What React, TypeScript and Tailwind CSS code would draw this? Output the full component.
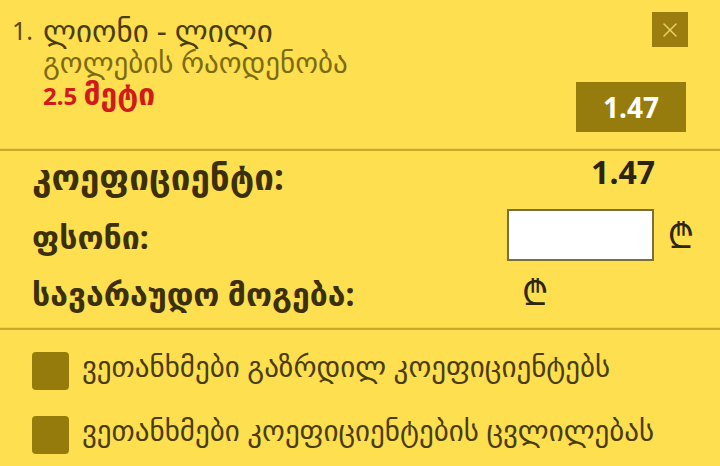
import { X } from 'lucide-react';

const FONT = { fontFamily: '"Noto Sans", "DejaVu Sans", sans-serif' };

function Divider() {
  return (
    <div className="border-t border-[#f0d247]">
      <div className="h-[2px] bg-[#c9a82c]" />
    </div>
  );
}

function Lari({ className = '' }: { className?: string }) {
  return <span className={`text-[34px] leading-none text-[#2d2610] ${className}`}>₾</span>;
}

function Agreement({ label }: { label: string }) {
  return (
    <label className="flex h-[38px] items-center gap-[13px]">
      <span className="h-[38px] w-[37px] shrink-0 rounded-[4px] bg-[#957a0c]" />
      <span className="-mt-[10px] text-[29px] leading-[38px] text-[#4a3c0a]">{label}</span>
    </label>
  );
}

export default function App() {
  return (
    <div className="h-[466px] w-[720px] overflow-hidden bg-[#fddf4f]" style={FONT}>
      {/* selected bet */}
      <div className="flex h-[148px] justify-between pl-[12px] pr-[34px] pt-[12px]">
        <div className="flex items-start gap-[10px]">
          <span className="mt-[2px] text-[25px] leading-[32px] text-[#5a4b0c]">1.</span>
          <div className="flex flex-col">
            <span className="mt-[2px] h-[32px] text-[31px] leading-[32px] text-[#4b3d0a]">ლიონი - ლილი</span>
            <span className="h-[32px] text-[29px] leading-[32px] text-[#7d6b12]">გოლების რაოდენობა</span>
            <span className="h-[32px] text-[24px] font-bold leading-[32px] text-[#d11a1a]">
              2.5 <span className="text-[30px]">მეტი</span>
            </span>
          </div>
        </div>
        <div className="flex flex-col items-end">
          <button className="mr-[-2px] flex h-[35px] w-[36px] items-center justify-center bg-[#9a7d0e] text-[#e9d267]">
            <X size={24} strokeWidth={1.4} />
          </button>
          <div className="mt-[35px] flex h-[50px] w-[110px] items-center justify-center bg-[#967c0d] text-[28px] font-bold text-white">
            1.47
          </div>
        </div>
      </div>

      <Divider />

      {/* stake */}
      <div className="flex h-[176px] flex-col pl-[32px] pr-[26px]">
        <div className="flex h-[60px] items-start justify-between">
          <span className="mt-[6px] text-[35px] font-bold leading-[40px] text-[#3b300b]">კოეფიციენტი:</span>
          <span className="mr-[39px] mt-[5px] text-[32px] font-bold leading-[32px] text-[#2a2410]">1.47</span>
        </div>
        <div className="flex h-[57px] items-center justify-between">
          <span className="-mt-[6px] text-[32px] font-bold leading-[40px] text-[#3b300b]">ფსონი:</span>
          <div className="-mt-[10px] flex items-center gap-[14px]">
            <input className="h-[52px] w-[147px] border-2 border-[#7a6e3a] bg-white outline-none" />
            <Lari />
          </div>
        </div>
        <div className="flex h-[57px] items-center">
          <span className="-mt-[6px] w-[490px] text-[32px] font-bold leading-[40px] text-[#3b300b]">სავარაუდო მოგება:</span>
          <Lari className="-mt-[10px]" />
        </div>
      </div>

      <Divider />

      {/* agreements */}
      <div className="flex flex-col gap-[26px] pl-[32px] pt-[22px]">
        <Agreement label="ვეთანხმები გაზრდილ კოეფიციენტებს" />
        <Agreement label="ვეთანხმები კოეფიციენტების ცვლილებას" />
      </div>
    </div>
  );
}
